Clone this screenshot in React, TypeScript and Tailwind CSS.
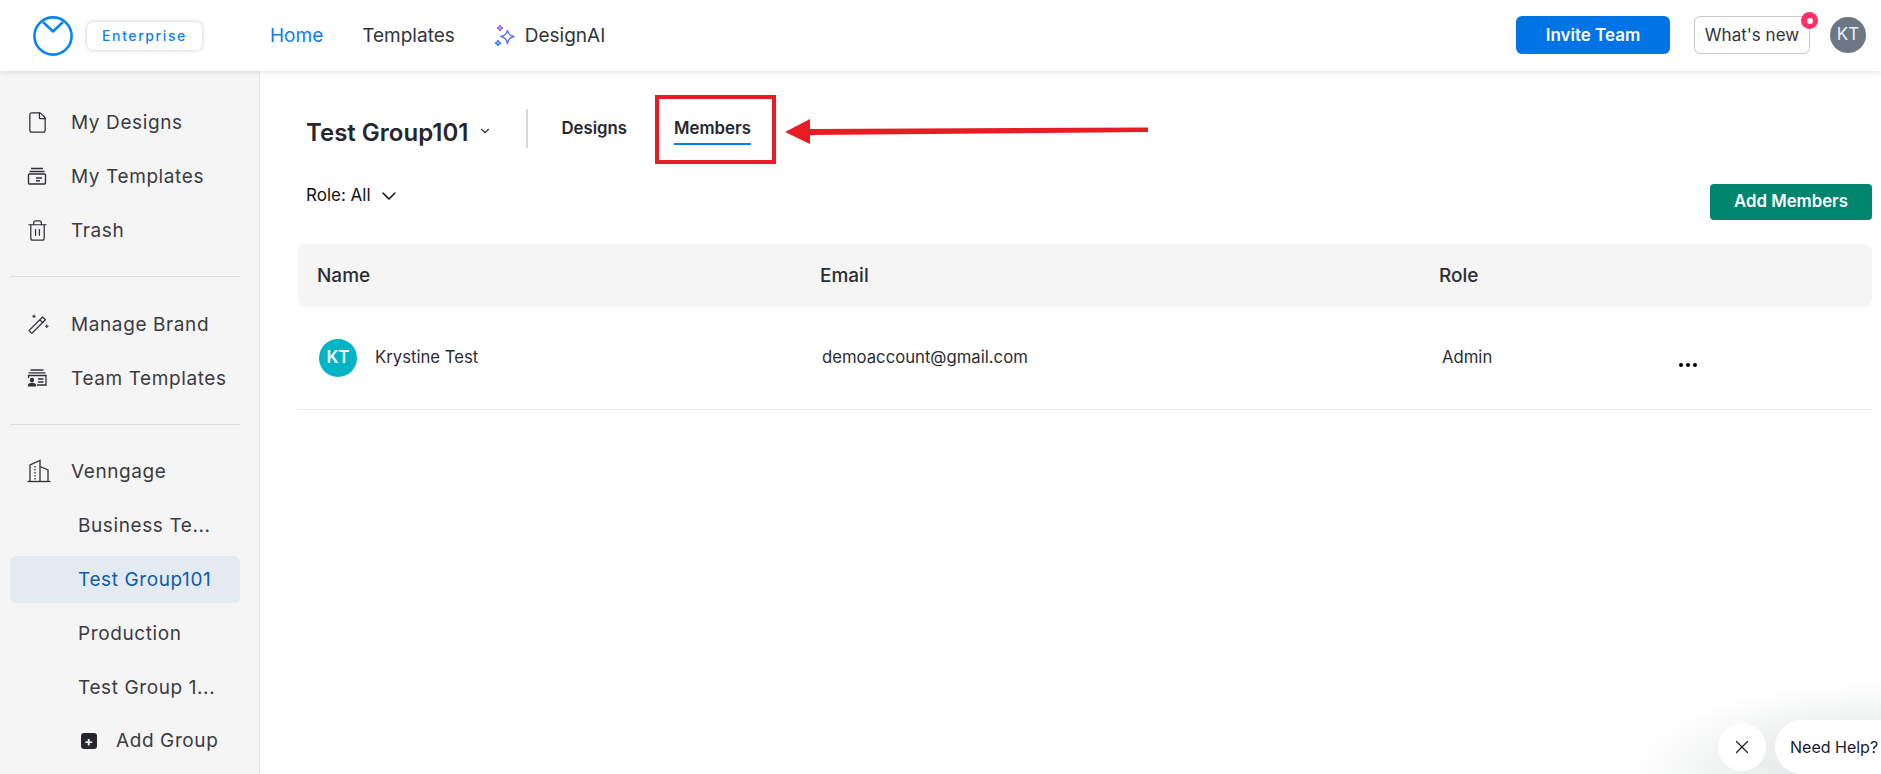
import { ChevronDown, File, Trash2, X } from "lucide-react";

function Logo() {
  return (
    <svg width="40" height="40" viewBox="0 0 40 40" fill="none" stroke="#0a84f5" strokeWidth="2.6">
      <ellipse cx="20" cy="20" rx="18.6" ry="18.6" />
      <path d="M10 6 L20 15.5 L30 6" strokeLinejoin="round" />
    </svg>
  );
}

function SparkleIcon() {
  return (
    <svg width="22" height="24" viewBox="0 0 22 24" fill="none" strokeWidth="1.3">
      <path d="M13.5 6 C14 10 16 12 20.5 12.5 C16 13 14 15.5 13.5 20 C13 15.5 10.5 13 6.5 12.5 C10.5 12 13 10 13.5 6 Z" stroke="#5b6cf0" />
      <path d="M6 1 C6.3 3 7 3.8 9 4 C7 4.3 6.3 5 6 7 C5.7 5 5 4.3 3 4 C5 3.8 5.7 3 6 1 Z" stroke="#9b5cf0" />
      <path d="M4 16 C4.3 18 5 18.7 7 19 C5 19.3 4.3 20 4 22 C3.7 20 3 19.3 1 19 C3 18.7 3.7 18 4 16 Z" stroke="#3b7cf0" />
    </svg>
  );
}

function TemplatesIcon() {
  return (
    <svg width="20" height="20" viewBox="0 0 20 20" fill="none" stroke="#2f3037" strokeWidth="1.4">
      <path d="M4 2.5 H16 M2.5 5.5 H17.5" />
      <rect x="1.5" y="8" width="17" height="10" rx="1" />
      <path d="M9 12 H15 M9 14.8 H13" />
    </svg>
  );
}

function WandIcon() {
  return (
    <svg width="22" height="22" viewBox="0 0 22 22" fill="none" stroke="#2f3037" strokeWidth="1.3">
      <path d="M2 17.6 L15.6 4 L18.4 6.8 L4.8 20.4 Z" strokeLinejoin="round" />
      <path d="M12.8 6.8 L15.6 9.6" />
      <path d="M7 1.5 V5 M5.2 3.2 H8.8 M19.8 11.5 V15 M18 13.2 H21.6" strokeWidth="1.1" />
    </svg>
  );
}

function TeamTemplatesIcon() {
  return (
    <svg width="20" height="20" viewBox="0 0 20 20" fill="none" stroke="#2f3037" strokeWidth="1.3">
      <path d="M3.5 2 H16.5 M1.5 4.8 H18.5" />
      <path d="M1.5 10 V7.5 H19 V17 H10" />
      <path d="M11 11 H16.5 M11 14 H16.5" />
      <circle cx="5" cy="12" r="2.2" fill="#2f3037" stroke="none" />
      <path d="M0.8 18.5 C0.8 15.5 2.5 14.8 5 14.8 C7.5 14.8 9.2 15.5 9.2 18.5 Z" fill="#2f3037" stroke="none" />
    </svg>
  );
}

function BuildingIcon() {
  return (
    <svg width="24" height="24" viewBox="0 0 24 24" fill="none" stroke="#2f3037" strokeWidth="1.3">
      <path d="M0.5 22.5 H23.5" />
      <path d="M3 22.5 V6 L13 1.5 V22.5" />
      <path d="M13 7.5 L21 11 V22.5" />
      <path d="M8 7 V20.5" strokeDasharray="1.4 1.6" />
    </svg>
  );
}

function NavItem({ icon, label }: { icon: React.ReactNode; label: string }) {
  return (
    <div className="flex h-[54px] items-center pl-[27px] text-[19px] tracking-[0.6px] text-[#3a3b42]">
      <div className="flex w-[44px] shrink-0 items-center">{icon}</div>
      <span className="pt-[2px]">{label}</span>
    </div>
  );
}

function GroupItem({ label, active }: { label: string; active?: boolean }) {
  return (
    <div className="flex h-[54px] items-center">
      <div
        className={`ml-[10px] mr-[19px] flex h-[47px] flex-1 items-center rounded-md pl-[68px] pt-[2px] text-[19px] tracking-[0.6px] ${
          active ? "bg-[#e3eaf2] text-[#0f5cab]" : "text-[#3a3b42]"
        }`}
      >
        {label}
      </div>
    </div>
  );
}

function Divider({ className }: { className: string }) {
  return <div className={`ml-[10px] mr-[19px] mt-[19px] h-px bg-[#dcdcdc] ${className}`} />;
}

function Sidebar() {
  return (
    <aside className="w-[260px] shrink-0 border-r border-[#e8e8e8] bg-[#f5f5f5] pt-[24px]">
      <NavItem icon={<File size={23} strokeWidth={1.3} color="#2f3037" className="-ml-[1px]" />} label="My Designs" />
      <NavItem icon={<TemplatesIcon />} label="My Templates" />
      <NavItem icon={<Trash2 size={23} strokeWidth={1.3} color="#2f3037" className="-ml-[1px]" />} label="Trash" />
      <Divider className="mb-[20px]" />
      <NavItem icon={<WandIcon />} label="Manage Brand" />
      <NavItem icon={<TeamTemplatesIcon />} label="Team Templates" />
      <Divider className="mb-[19px]" />
      <NavItem icon={<BuildingIcon />} label="Venngage" />
      <GroupItem label="Business Te..." />
      <GroupItem label="Test Group101" active />
      <GroupItem label="Production" />
      <GroupItem label="Test Group 1..." />
      <div className="flex h-[54px] items-center pl-[81px] text-[19px] tracking-[0.6px] text-[#3a3b42]">
        <div className="mr-[19px] flex h-4 w-4 items-center justify-center rounded-[3px] bg-[#26272e] text-[13px] font-bold leading-none text-white">
          +
        </div>
        Add Group
      </div>
    </aside>
  );
}

function Header() {
  return (
    <header className="relative z-10 flex h-[71px] shrink-0 items-center bg-white pl-[33px] pr-[15px] shadow-[0_1px_5px_rgba(0,0,0,0.12)]">
      <Logo />
      <div className="ml-[14px] flex h-[28px] w-[115px] items-center justify-center rounded-md bg-white text-[14px] font-medium tracking-[1.6px] text-[#0a84f5] shadow-[0_0_4px_rgba(0,0,0,0.22)]">
        Enterprise
      </div>
      <nav className="ml-[68px] flex items-center pt-[1px] text-[19px] text-[#33343b]">
        <span className="text-[#0a7ff0]">Home</span>
        <span className="ml-[39px]">Templates</span>
        <span className="ml-[39px] mr-[9px]">
          <SparkleIcon />
        </span>
        <span>DesignAI</span>
      </nav>
      <div className="ml-auto -mt-[1px] flex items-center">
        <button className="h-[38px] w-[154px] rounded-md bg-[#0073e6] pt-[2px] text-[17px] font-semibold text-white">
          Invite Team
        </button>
        <div className="relative ml-[24px] flex h-[38px] w-[116px] items-center justify-center rounded-md border border-[#c9c9c9] pt-[2px] text-[17px] text-[#33343b]">
          What's new
          <span className="absolute right-[-9px] top-[-5px] flex h-[17px] w-[17px] items-center justify-center rounded-full bg-[#ff3068]">
            <span className="h-[6px] w-[6px] rounded-full bg-white" />
          </span>
        </div>
        <div className="ml-[20px] flex h-[36px] w-[36px] items-center justify-center rounded-full bg-[#6b7785] text-[17px] text-[#eef0f2]">
          KT
        </div>
      </div>
    </header>
  );
}

function MembersTable() {
  return (
    <div className="ml-[38px] mr-[9px] mt-[24px] text-[#2c2d33]">
      <div className="grid h-[63px] grid-cols-[503px_619px_1fr] items-center rounded-lg bg-[#f5f5f5] pl-[19px] pt-[2px] text-[19px] font-medium">
        <span>Name</span>
        <span>Email</span>
        <span>Role</span>
      </div>
      <div className="grid h-[103px] grid-cols-[503px_620px_237px_1fr] items-center border-b border-[#e8e8e8] pl-[21px] text-[16.7px]">
        <div className="flex items-center">
          <div className="flex h-[38px] w-[38px] items-center justify-center rounded-full bg-[#00b4c5] text-[17px] font-semibold text-white">
            KT
          </div>
          <span className="ml-[18px]">Krystine Test</span>
        </div>
        <span>demoaccount@gmail.com</span>
        <span>Admin</span>
        <div className="mt-[14px] flex gap-[3px]">
          <span className="h-[4px] w-[4px] rounded-full bg-black" />
          <span className="h-[4px] w-[4px] rounded-full bg-black" />
          <span className="h-[4px] w-[4px] rounded-full bg-black" />
        </div>
      </div>
    </div>
  );
}

function Annotation() {
  return (
    <>
      <div className="absolute left-[655px] top-[95px] h-[69px] w-[121px] border-[4px] border-[#e81c24]" />
      <svg className="absolute left-[780px] top-[115px]" width="372" height="32" viewBox="0 0 372 32">
        <path d="M5 17 L30 4 L30 14 L368 12.5 L368 17 L30 20 L30 29 Z" fill="#e81c24" />
      </svg>
    </>
  );
}

function HelpWidget() {
  return (
    <div className="absolute bottom-0 right-0 flex h-[90px] w-[250px] items-center justify-end bg-[radial-gradient(ellipse_at_100%_100%,#dfe3e4_0%,#eef0f0_40%,rgba(255,255,255,0)_72%)] pt-[36px]">
      <div className="mr-[9px] flex h-[48px] w-[48px] items-center justify-center rounded-full bg-white">
        <X size={22} strokeWidth={1.3} color="#222" />
      </div>
      <div className="flex h-[54px] w-[106px] items-center overflow-hidden whitespace-nowrap rounded-l-[27px] bg-white pl-[15px] text-[16px] text-[#1a1a2e]">
        Need Help?
      </div>
    </div>
  );
}

export default function App() {
  return (
    <div className="flex h-screen flex-col overflow-hidden bg-white font-['Inter',sans-serif]">
      <Header />
      <div className="flex min-h-0 flex-1">
        <Sidebar />
        <main className="relative flex-1">
          <div className="ml-[46px] mr-[9px] mt-[38px] flex h-[39px] items-center">
            <span className="pt-[8px] text-[24px] font-semibold text-[#26272e]">Test Group101</span>
            <ChevronDown size={14} className="ml-[10px] mt-[5px]" color="#33343b" />
            <div className="ml-[34px] h-[39px] w-[2px] bg-[#d8d8d8]" />
            <span className="ml-[33px] pt-[1px] text-[16.8px] font-semibold text-[#26272e]">Designs</span>
            <div className="relative ml-[47px] pt-[1px] text-[16.8px] font-semibold text-[#26272e]">
              Members
              <div className="absolute bottom-[-3px] left-0 h-[2px] w-full bg-[#0a7ff0]" />
            </div>
          </div>
          <div className="ml-[46px] mr-[9px] mt-[27px] flex items-start justify-between">
            <div className="flex items-center pt-[8px] text-[17px] text-[#111]">
              Role: All
              <ChevronDown size={24} strokeWidth={1.5} className="ml-[6px]" />
            </div>
            <button className="mt-[9px] h-[36px] w-[162px] rounded bg-[#00856f] text-[16.8px] font-semibold text-white">
              Add Members
            </button>
          </div>
          <MembersTable />
          <div className="absolute left-[-260px] top-[-71px]">
            <Annotation />
          </div>
        </main>
      </div>
      <HelpWidget />
    </div>
  );
}
